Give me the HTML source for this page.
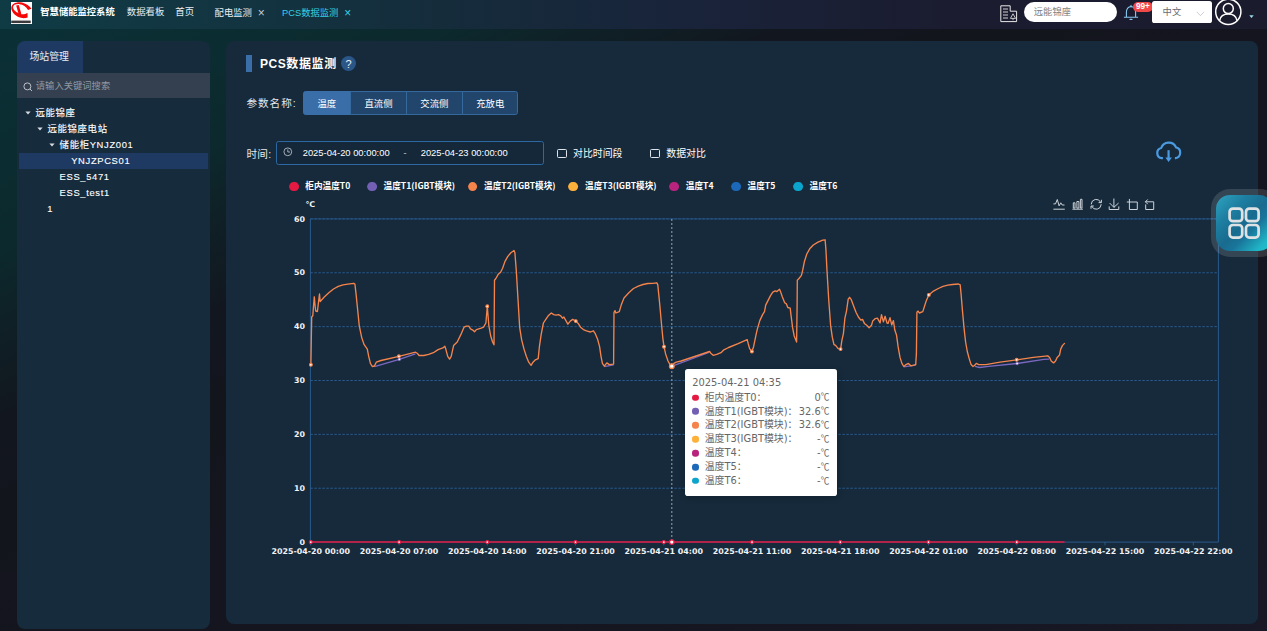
<!DOCTYPE html>
<html lang="zh-CN">
<head>
<meta charset="utf-8">
<title>PCS数据监测</title>
<style>
*{box-sizing:border-box;margin:0;padding:0}
html,body{width:1267px;height:631px;overflow:hidden}
body{position:relative;font-family:"Liberation Sans","Noto Sans CJK SC",sans-serif;color:#fff;
 background:linear-gradient(to bottom right,#0a3138 0%,#0b2d31 12%,#0c292d 20%,#0f2026 26%,#12171f 33%,#13151d 40%,#15151f 65%,#181826 100%);}
.abs{position:absolute;white-space:nowrap}
/* header */
.hdr{position:absolute;left:0;top:0;width:1267px;height:28.9px;
 background:linear-gradient(90deg,#0f3b45 0%,#123642 15%,#152c3b 35%,#19233a 55%,#1b1c30 75%,#1b1b2e 100%);}
.logo{position:absolute;left:10.8px;top:1.9px;width:21.4px;height:21.8px;background:#fff}
.t{position:absolute;white-space:nowrap;line-height:1;transform:translateY(-50%)}
/* panels */
.side{position:absolute;left:16.8px;top:41.2px;width:193.2px;height:588.3px;background:#162b3c;border-radius:8px;overflow:hidden}
.main{position:absolute;left:225.6px;top:41.2px;width:1032.2px;height:582.5px;background:#162a3b;border-radius:8px}
.tab{position:absolute;left:0;top:0;width:66.2px;height:32px;background:#1e3a62}
.search{position:absolute;left:0;top:32px;width:193.2px;height:24.8px;background:#34404f}
.sel{position:absolute;left:2.2px;top:111.9px;width:189px;height:15.6px;background:#1e3a62}
.tree{font-size:9.4px;letter-spacing:0.66px;color:#fff}
.tree .t{margin-top:-0.1px;-webkit-text-stroke:0.12px #fff}
.caret{position:absolute;width:0;height:0;border-left:2.8px solid transparent;border-right:2.8px solid transparent;border-top:3.3px solid #d5dbe3;transform:translateY(-35%);margin-left:0.7px}
/* buttons */
.btn{position:absolute;top:91.3px;height:23.5px;background:#22466b;border:0.9px solid #35689d;font-size:9.4px;color:#fff;text-align:center;line-height:23px}
.btn.on{background:#3a6ea8;border-color:#3a6ea8}
.range{position:absolute;left:276.4px;top:141.2px;width:267.2px;height:24.3px;border:0.9px solid #2c68a3;border-radius:2.6px;background:#14283a}
.cb{position:absolute;width:9.4px;height:9.4px;border:0.9px solid #dfe4ea;border-radius:1.4px;background:transparent}
.dot{position:absolute;width:9.8px;height:9.8px;border-radius:50%;transform:translate(-50%,-50%)}
.lg{position:absolute;white-space:nowrap;line-height:1;transform:translateY(-50%);font-family:"Noto Sans CJK SC","Liberation Sans",sans-serif;font-weight:bold;font-size:8.65px;color:#fff}
.chart{position:absolute;left:0;top:0;pointer-events:none}
.chart .ax{font-family:"DejaVu Sans","Noto Sans CJK SC",sans-serif;font-weight:bold;font-size:7.92px;fill:#f1f3f6}
/* tooltip */
.tip{position:absolute;left:685px;top:368.6px;width:151.8px;height:127.3px;background:#fff;border-radius:2.8px;box-shadow:0.6px 1.2px 6px rgba(0,0,0,.2);
 font-family:"DejaVu Sans","Noto Sans CJK SC",sans-serif;color:#666;font-size:9.9px}
.tip .r{position:absolute;left:6.8px;right:7.5px;height:13.87px;line-height:13.87px;white-space:nowrap}
.tip .r i{position:absolute;left:0.4px;top:50%;width:6.6px;height:6.6px;border-radius:50%;transform:translateY(-50%)}
.tip .r span{position:absolute;left:12.9px}
.tip .r b{position:absolute;right:0;font-weight:normal}
.tip .r b em{position:relative;top:-0.4px;font-style:normal;font-family:"Noto Sans CJK SC",sans-serif;font-size:8.6px}
/* float */
.fab{position:absolute;left:1210.6px;top:189.2px;width:68px;height:67.8px;border-radius:19px;background:rgba(255,255,255,.13)}
.fab .in{position:absolute;left:5.6px;top:5.5px;width:56.8px;height:56.7px;border-radius:14px;
 background:linear-gradient(135deg,#2fa3c0 0%,#1d7fa2 28%,#186b8e 50%,#19749a 62%,#1fb4c6 85%,#22c6d0 100%)}
</style>
</head>
<body>
<!-- header -->
<div class="hdr">
 <div class="logo">
  <svg width="21.4" height="21.8" viewBox="0 0 477 488">
   <path d="M457 152 C420 90 330 20 200 5 C100 0 10 50 5 130 C5 230 110 340 250 360 C300 365 340 355 372 345 L368 240 C320 275 260 285 215 270 C130 245 50 190 45 120 C45 70 100 42 190 48 C270 55 340 100 380 178 Z" fill="#f40808"/>
   <path d="M115 78 L172 66 L230 265 L172 278 Z" fill="#f40808"/>
   <rect x="4" y="416" width="436" height="56" fill="#3a3a3a"/>
  </svg>
 </div>
 <div class="t" style="left:40.3px;top:13.3px;font-size:9.3px;font-weight:bold">智慧储能监控系统</div>
 <div class="t" style="left:126.8px;top:11.6px;font-size:9.4px;color:#e9eef2">数据看板</div>
 <div class="t" style="left:175.3px;top:11.6px;font-size:9.4px;color:#e9eef2">首页</div>
 <div class="t" style="left:214.6px;top:13.8px;font-size:9.3px;color:#e9eef2">配电监测</div>
 <div class="t" style="left:257.8px;top:13.4px;font-size:12px;color:#c5ccd3">×</div>
 <div class="t" style="left:282.1px;top:13.8px;font-size:9.3px;color:#35d0e6">PCS数据监测</div>
 <div class="t" style="left:344.3px;top:13.4px;font-size:12px;color:#35d0e6">×</div>

 <!-- doc icon -->
 <svg class="abs" style="left:1000px;top:5px" width="18" height="18" viewBox="0 0 18 18" fill="none" stroke="#e8e8e8" stroke-width="1">
  <path d="M0.8 0.8 H10.2 V6.2 H16.6 V16.6 H0.8 Z"/>
  <path d="M3 4 H8 M3 7 H8 M3 10 H8 M3 13 H8" stroke-width="0.9"/>
  <path d="M13 8.8 L15.6 13.4 H10.4 Z M13 13.4 V15.2" stroke-width="0.8"/>
 </svg>
 <!-- pill -->
 <div class="abs" style="left:1023.8px;top:1.5px;width:92.9px;height:20px;border-radius:10px;background:#fff"></div>
 <div class="t" style="left:1033.8px;top:12.6px;font-size:9.3px;color:#7c7f86">远能锦座</div>
 <!-- bell -->
 <svg class="abs" style="left:1122.8px;top:3.9px" width="16" height="17" viewBox="0 0 16 17" fill="none" stroke="#86c9ee" stroke-width="1.1">
  <path d="M0.9 13.2 H15.1 M3.4 13 V8 C3.4 4.6 5.4 2.6 8 2.6 C10.6 2.6 12.6 4.6 12.6 8 V13"/>
  <path d="M8 1.2 V2.6 M7 15.4 H9" stroke-linecap="round"/>
 </svg>
 <div class="abs" style="left:1132.5px;top:1.7px;width:20.6px;height:10.4px;border-radius:5.2px;background:#f14848"></div>
 <div class="t" style="left:1135.9px;top:7.2px;font-size:8.2px;font-weight:bold;color:#fff">99+</div>
 <!-- select -->
 <div class="abs" style="left:1152.2px;top:1.4px;width:59.8px;height:21.4px;border-radius:2.6px;background:#fff"></div>
 <div class="t" style="left:1162.6px;top:12.5px;font-size:9.3px;color:#686b72">中文</div>
 <svg class="abs" style="left:1196px;top:11.2px" width="9" height="6" viewBox="0 0 9 6" fill="none" stroke="#c4c8cf" stroke-width="0.9"><path d="M0.8 0.9 L4.4 4.6 L8 0.9"/></svg>
 <!-- avatar -->
 <svg class="abs" style="left:1214px;top:-2px" width="29" height="29" viewBox="0 0 29 29" fill="none" stroke="#fff" stroke-width="1.5">
  <circle cx="14.3" cy="13.8" r="12.6"/>
  <circle cx="14.3" cy="10.6" r="5"/>
  <path d="M5.6 22.6 C6.4 18.2 9.8 16 14.3 16 C18.8 16 22.2 18.2 23 22.6"/>
 </svg>
 <svg class="abs" style="left:1248.6px;top:14.7px" width="5" height="3.4" viewBox="0 0 5 3.4"><path d="M0.3 0.3 H4.7 L2.5 3.1 Z" fill="#9bd6f2"/></svg>
</div>

<!-- sidebar -->
<div class="side">
 <div class="tab"></div>
 <div class="t" style="left:12.6px;top:16px;font-size:9.9px;color:#e8edf3">场站管理</div>
 <div class="search"></div>
 <svg class="abs" style="left:5.8px;top:40.6px" width="10" height="10" viewBox="0 0 10 10" fill="none" stroke="#c9ced6" stroke-width="0.9"><circle cx="4.4" cy="4.4" r="3.5"/><path d="M7 7 L9 9"/></svg>
 <div class="t" style="left:19px;top:45.9px;font-size:9.3px;color:#8f98a4">请输入关键词搜索</div>
 <div class="sel"></div>
 <div class="tree">
  <svg class="abs" style="left:7.9px;top:69.8px" width="6" height="4" viewBox="0 0 6 4"><path d="M0.4 0.4 H5.6 L3 3.6 Z" fill="#d8dde4"/></svg>
  <div class="t" style="left:18.7px;top:71.9px">远能锦座</div>
  <svg class="abs" style="left:20.0px;top:85.9px" width="6" height="4" viewBox="0 0 6 4"><path d="M0.4 0.4 H5.6 L3 3.6 Z" fill="#d8dde4"/></svg>
  <div class="t" style="left:30.7px;top:88px">远能锦座电站</div>
  <svg class="abs" style="left:32.3px;top:102.1px" width="6" height="4" viewBox="0 0 6 4"><path d="M0.4 0.4 H5.6 L3 3.6 Z" fill="#d8dde4"/></svg>
  <div class="t" style="left:42.8px;top:104px">储能柜YNJZ001</div>
  <div class="t" style="left:54.4px;top:119.8px">YNJZPCS01</div>
  <div class="t" style="left:42.8px;top:136px">ESS_5471</div>
  <div class="t" style="left:42.8px;top:152px">ESS_test1</div>
  <div class="t" style="left:30.5px;top:168px">1</div>
 </div>
</div>

<!-- main -->
<div class="main"></div>
<div class="abs" style="left:246px;top:54.8px;width:5.6px;height:16.8px;background:#3a6ea8"></div>
<div class="t" style="left:259.9px;top:63.6px;font-size:12px;font-weight:bold;letter-spacing:0.6px">PCS数据监测</div>
<div class="abs" style="left:340.9px;top:56.1px;width:15px;height:15px;border-radius:50%;background:#2a5688"></div>
<div class="t" style="left:345.5px;top:63.9px;font-size:11px;color:#e6edf5">?</div>

<div class="t" style="left:246.5px;top:102.6px;font-size:10.6px;color:#e3e8ee;letter-spacing:0.95px">参数名称:</div>
<div class="btn on" style="left:303px;width:47.6px;border-radius:2.6px 0 0 2.6px">温度</div>
<div class="btn" style="left:350.3px;width:56.4px">直流侧</div>
<div class="btn" style="left:406.2px;width:56.4px">交流侧</div>
<div class="btn" style="left:462.1px;width:56.4px;border-radius:0 2.6px 2.6px 0">充放电</div>

<div class="t" style="left:246.4px;top:154px;font-size:10.6px;color:#e3e8ee;letter-spacing:0.3px">时间:</div>
<div class="range"></div>
<svg class="abs" style="left:283.3px;top:147.2px" width="10" height="10" viewBox="0 0 10 10" fill="none" stroke="#c6ccd4" stroke-width="0.8"><circle cx="4.8" cy="4.8" r="3.9"/><path d="M4.8 2.4 V5 H7"/></svg>
<div class="t" style="left:302.7px;top:154.1px;font-size:9.37px;color:#fff">2025-04-20 00:00:00</div>
<div class="t" style="left:403.4px;top:153.8px;font-size:9.3px;color:#c6ccd4">-</div>
<div class="t" style="left:420.7px;top:154.1px;font-size:9.37px;color:#fff">2025-04-23 00:00:00</div>

<div class="cb" style="left:557.2px;top:148.6px"></div>
<div class="t" style="left:573.1px;top:153.6px;font-size:9.9px;color:#fff">对比时间段</div>
<div class="cb" style="left:650.2px;top:148.6px"></div>
<div class="t" style="left:666.3px;top:153.6px;font-size:9.9px;color:#fff">数据对比</div>

<!-- cloud download -->
<svg class="abs" style="left:1154px;top:140px" width="30" height="24" viewBox="0 0 30 24" fill="none" stroke="#4a9ae2" stroke-width="2.2" stroke-linecap="butt" stroke-linejoin="round">
 <path d="M8.9 18.2 H7.8 A5.2 5.2 0 0 1 7.2 8 A7.95 7.95 0 0 1 22 7.4 A5.5 5.5 0 0 1 21.4 18.2 H20.9"/>
 <path d="M14.57 10.2 V18.4"/>
 <path d="M11.4 17.5 H17.9 L14.57 22 Z" fill="#4a9ae2" stroke="none"/>
</svg>

<!-- legend -->
<div class="dot" style="left:293.8px;top:186.5px;background:#e51a42"></div><div class="lg" style="left:305.3px;top:185.4px">柜内温度T0</div>
<div class="dot" style="left:372px;top:186.5px;background:#7360b4"></div><div class="lg" style="left:383.6px;top:185.4px">温度T1(IGBT模块)</div>
<div class="dot" style="left:472.5px;top:186.5px;background:#f5844c"></div><div class="lg" style="left:484.1px;top:185.4px">温度T2(IGBT模块)</div>
<div class="dot" style="left:573.3px;top:186.5px;background:#fdb03a"></div><div class="lg" style="left:585px;top:185.4px">温度T3(IGBT模块)</div>
<div class="dot" style="left:674.2px;top:186.5px;background:#b7237d"></div><div class="lg" style="left:685.8px;top:185.4px">温度T4</div>
<div class="dot" style="left:735.9px;top:186.5px;background:#1b69b8"></div><div class="lg" style="left:747.5px;top:185.4px">温度T5</div>
<div class="dot" style="left:797.9px;top:186.5px;background:#0aa4cc"></div><div class="lg" style="left:809.5px;top:185.4px">温度T6</div>

<!-- toolbox -->
<svg class="abs" style="left:1052px;top:197px" width="106" height="15" viewBox="0 0 106 15" fill="none" stroke="#cdd2d8" stroke-width="1" stroke-linejoin="round" stroke-linecap="round">
 <path d="M1.8 6.9 H3.5 L5.3 2.5 L7.1 8.9 L8.8 5.8 L10.2 8 H12.1 M1.8 12.2 H12.4"/>
 <path d="M20.8 12.2 H30.5 M21.3 10.7 V5.8 H23 V10.7 Z M24.9 10.7 V4.5 H26.9 V10.7 Z M28.4 10.7 V2.3 H30 V10.7 Z"/>
 <path d="M39.2 7 A5 5 0 0 1 48.7 5.2 M49.2 7.6 A5 5 0 0 1 39.7 9.4"/>
 <path d="M49.4 3.2 V5.6 H47 M39 11.4 V9 H41.4"/>
 <path d="M61.9 1.9 V10.1 M57.9 6.3 L61.9 10.3 L66.3 6.3 M57.2 9.8 V12.5 H66.8 V9.8"/>
 <path d="M75.2 5 H85.3 V12.5 H77.4 V2.3"/>
 <path d="M95.5 2.7 L93.4 4.8 L95.5 6.9 M93.6 4.8 H101.7 V12.5 H93.7 V7.8"/>
</svg>

<svg class="chart" width="1267" height="631" viewBox="0 0 1267 631">
<line x1="310.4" y1="218.90" x2="1218.4" y2="218.90" stroke="#2b5f96" stroke-width="0.9" stroke-dasharray="2.4 1.6"/>
<line x1="310.4" y1="272.77" x2="1218.4" y2="272.77" stroke="#2b5f96" stroke-width="0.9" stroke-dasharray="2.4 1.6"/>
<line x1="310.4" y1="326.63" x2="1218.4" y2="326.63" stroke="#2b5f96" stroke-width="0.9" stroke-dasharray="2.4 1.6"/>
<line x1="310.4" y1="380.50" x2="1218.4" y2="380.50" stroke="#2b5f96" stroke-width="0.9" stroke-dasharray="2.4 1.6"/>
<line x1="310.4" y1="434.37" x2="1218.4" y2="434.37" stroke="#2b5f96" stroke-width="0.9" stroke-dasharray="2.4 1.6"/>
<line x1="310.4" y1="488.23" x2="1218.4" y2="488.23" stroke="#2b5f96" stroke-width="0.9" stroke-dasharray="2.4 1.6"/>
<line x1="310.4" y1="218.9" x2="310.4" y2="545.1" stroke="#2b5f96" stroke-width="0.9"/>
<line x1="1218.4" y1="218.9" x2="1218.4" y2="542.1" stroke="#2b5f96" stroke-width="0.9"/>
<line x1="310.4" y1="542.1" x2="1218.4" y2="542.1" stroke="#2b5f96" stroke-width="0.9"/>
<line x1="310.4" y1="218.9" x2="1218.4" y2="218.9" stroke="#2b5f96" stroke-width="0.9" stroke-opacity="0.7"/>
<line x1="310.8" y1="542.1" x2="310.8" y2="545.4" stroke="#2b5f96" stroke-width="0.9"/>
<line x1="399.1" y1="542.1" x2="399.1" y2="545.4" stroke="#2b5f96" stroke-width="0.9"/>
<line x1="487.3" y1="542.1" x2="487.3" y2="545.4" stroke="#2b5f96" stroke-width="0.9"/>
<line x1="575.5" y1="542.1" x2="575.5" y2="545.4" stroke="#2b5f96" stroke-width="0.9"/>
<line x1="663.8" y1="542.1" x2="663.8" y2="545.4" stroke="#2b5f96" stroke-width="0.9"/>
<line x1="752.0" y1="542.1" x2="752.0" y2="545.4" stroke="#2b5f96" stroke-width="0.9"/>
<line x1="840.3" y1="542.1" x2="840.3" y2="545.4" stroke="#2b5f96" stroke-width="0.9"/>
<line x1="928.5" y1="542.1" x2="928.5" y2="545.4" stroke="#2b5f96" stroke-width="0.9"/>
<line x1="1016.8" y1="542.1" x2="1016.8" y2="545.4" stroke="#2b5f96" stroke-width="0.9"/>
<line x1="1105.0" y1="542.1" x2="1105.0" y2="545.4" stroke="#2b5f96" stroke-width="0.9"/>
<line x1="1193.3" y1="542.1" x2="1193.3" y2="545.4" stroke="#2b5f96" stroke-width="0.9"/>
<text x="305" y="221.5" text-anchor="end" class="ax">60</text>
<text x="305" y="275.4" text-anchor="end" class="ax">50</text>
<text x="305" y="329.2" text-anchor="end" class="ax">40</text>
<text x="305" y="383.1" text-anchor="end" class="ax">30</text>
<text x="305" y="437.0" text-anchor="end" class="ax">20</text>
<text x="305" y="490.8" text-anchor="end" class="ax">10</text>
<text x="305" y="544.7" text-anchor="end" class="ax">0</text>
<text x="310.4" y="206.6" text-anchor="middle" class="ax">℃</text>
<text x="310.8" y="554.2" text-anchor="middle" class="ax">2025-04-20 00:00</text>
<text x="399.1" y="554.2" text-anchor="middle" class="ax">2025-04-20 07:00</text>
<text x="487.3" y="554.2" text-anchor="middle" class="ax">2025-04-20 14:00</text>
<text x="575.5" y="554.2" text-anchor="middle" class="ax">2025-04-20 21:00</text>
<text x="663.8" y="554.2" text-anchor="middle" class="ax">2025-04-21 04:00</text>
<text x="752.0" y="554.2" text-anchor="middle" class="ax">2025-04-21 11:00</text>
<text x="840.3" y="554.2" text-anchor="middle" class="ax">2025-04-21 18:00</text>
<text x="928.5" y="554.2" text-anchor="middle" class="ax">2025-04-22 01:00</text>
<text x="1016.8" y="554.2" text-anchor="middle" class="ax">2025-04-22 08:00</text>
<text x="1105.0" y="554.2" text-anchor="middle" class="ax">2025-04-22 15:00</text>
<text x="1193.3" y="554.2" text-anchor="middle" class="ax">2025-04-22 22:00</text>
<line x1="671.8" y1="218.9" x2="671.8" y2="542.1" stroke="#8e98a4" stroke-width="1.1" stroke-dasharray="2 2"/>
<polyline points="374.5,366.7 399.3,359.3 415.5,353.8" fill="none" stroke="#7b68c0" stroke-width="1.3" stroke-linejoin="round"/>
<polyline points="674.2,365.4 708.9,352.5" fill="none" stroke="#7b68c0" stroke-width="1.3" stroke-linejoin="round"/>
<polyline points="974.9,366.3 979.6,367.5 988.7,366.3 1017.1,363.5 1043.9,359.4 1049.1,359.2" fill="none" stroke="#7b68c0" stroke-width="1.3" stroke-linejoin="round"/>
<polyline points="604.3,366.6 613.6,364.8" fill="none" stroke="#7b68c0" stroke-width="1.3" stroke-linejoin="round"/>
<polyline points="903.8,366.9 915.7,365.2" fill="none" stroke="#7b68c0" stroke-width="1.3" stroke-linejoin="round"/>
<circle cx="399.3" cy="359.3" r="1.3" fill="#fff" stroke="#7b68c0" stroke-width="0.9"/>
<circle cx="1017.1" cy="363.5" r="1.3" fill="#fff" stroke="#7b68c0" stroke-width="0.9"/>
<polyline points="310.9,364.8 311.3,340.0 311.7,317.0 312.8,315.8 313.6,305.0 314.3,296.8 315.0,305.0 315.7,311.0 317.4,311.6 318.5,302.0 319.5,294.0 320.2,301.6 324.0,297.3 328.8,292.8 333.5,289.0 338.3,286.4 343.0,284.9 347.8,284.2 353.7,283.3 354.9,284.0 356.1,294.4 357.3,306.3 359.2,325.3 361.6,337.2 364.0,344.4 367.3,349.1 368.7,356.3 370.4,363.4 372.3,366.5 374.4,366.0 376.3,362.2 381.0,360.5 398.9,356.3 415.6,352.2 417.2,353.2 419.1,355.5 423.9,355.5 428.6,354.4 433.4,352.7 438.1,349.6 442.9,347.9 444.8,346.3 445.8,349.1 447.7,356.3 449.6,359.1 451.2,356.3 453.6,345.6 457.2,342.0 460.7,334.9 464.0,327.2 466.4,326.1 468.8,326.1 470.5,328.9 472.8,330.1 474.5,331.8 476.4,329.6 478.8,328.9 481.2,328.2 483.5,327.2 485.9,323.0 487.3,306.3 488.8,325.3 490.7,336.0 492.6,342.0 494.0,344.8 494.5,280.2 495.9,278.5 498.3,274.2 500.6,272.3 502.6,268.3 504.9,261.6 507.8,256.4 510.9,252.8 514.0,250.5 514.9,252.8 516.3,270.7 518.0,299.2 519.7,327.7 521.6,339.6 524.0,349.1 526.3,356.3 528.7,362.2 531.1,365.3 533.0,362.2 535.4,359.8 538.2,358.6 539.4,346.7 541.1,334.9 543.4,323.0 545.8,319.4 548.2,315.8 551.3,313.0 553.7,314.6 556.0,315.1 558.4,314.6 560.8,315.8 562.5,318.2 563.9,317.0 565.6,320.1 567.9,324.2 570.3,321.1 572.7,319.4 575.8,321.1 578.2,323.4 580.5,327.2 583.4,329.6 585.8,330.6 588.1,331.3 590.5,332.0 593.4,330.8 595.3,333.7 597.7,339.6 599.6,346.7 601.0,356.3 602.4,363.4 604.3,366.2 606.9,362.9 609.3,364.6 613.6,364.1 614.0,312.3 615.0,310.6 615.9,313.0 619.3,311.6 621.2,305.1 624.0,298.0 628.8,292.8 633.5,288.5 638.3,286.1 643.0,284.5 647.8,283.5 652.6,283.3 656.8,282.8 657.8,284.9 659.7,304.0 661.6,325.3 663.0,339.6 664.0,346.7 665.6,353.9 668.0,361.0 670.4,365.3 671.8,366.2 673.9,363.4 676.3,362.2 681.1,361.0 709.6,351.5 710.8,353.2 713.2,355.3 716.7,354.4 721.0,352.7 723.9,349.8 728.6,347.5 738.1,343.7 747.2,339.6 748.1,343.2 749.6,348.6 751.9,351.5 753.6,346.7 756.0,334.9 757.4,328.9 759.8,320.6 762.6,314.6 764.5,311.6 765.7,305.1 768.1,300.4 770.5,295.6 772.8,292.1 775.2,290.9 776.9,291.6 779.5,289.2 780.7,292.1 782.3,296.8 784.7,302.8 786.4,303.9 787.8,307.5 790.2,308.2 791.1,315.8 792.6,327.7 794.2,336.0 796.6,342.0 797.1,306.3 797.3,280.2 799.0,278.5 801.4,275.4 802.6,270.7 804.5,261.2 806.8,254.0 809.7,248.8 813.3,245.0 818.0,242.1 822.8,240.2 825.1,239.8 825.9,249.3 827.0,270.7 828.7,299.2 830.6,325.3 832.3,337.2 833.9,344.4 835.8,345.6 838.2,348.6 840.6,349.1 841.8,340.8 843.4,333.7 844.9,318.2 846.5,311.1 848.2,299.2 849.6,297.3 851.3,299.7 853.7,306.3 856.0,312.3 858.4,317.0 860.8,320.1 862.5,319.4 864.4,323.4 866.7,325.3 869.1,327.7 871.5,325.3 872.7,321.1 875.1,318.7 877.4,318.2 879.1,321.1 880.1,323.0 881.5,314.6 883.4,321.8 885.1,316.3 887.0,323.0 888.1,323.4 890.0,317.7 891.7,324.9 893.4,320.6 894.8,330.1 896.5,334.9 898.1,346.7 900.0,357.4 901.9,363.4 903.8,366.5 906.0,364.6 908.4,363.4 910.9,365.8 915.7,364.6 916.4,353.9 916.9,312.3 918.1,311.1 919.3,313.0 922.8,311.6 924.5,306.3 926.4,300.4 928.8,294.9 933.5,291.1 938.3,288.5 943.0,286.4 947.8,285.2 952.6,284.5 958.5,284.0 960.2,284.9 961.1,294.4 962.5,311.1 964.0,327.7 965.6,342.0 967.3,351.5 969.2,358.6 971.1,364.6 973.0,366.5 974.7,365.3 976.3,363.4 978.7,364.6 985.8,364.6 1000.1,362.2 1016.7,359.8 1033.4,357.4 1047.7,355.8 1049.6,357.4 1051.2,361.0 1053.6,362.9 1055.5,361.0 1057.2,357.4 1059.5,355.1 1060.7,349.1 1062.4,345.6 1064.5,343.4" fill="none" stroke="#f5844c" stroke-width="1.35" stroke-linejoin="round" stroke-linecap="round"/>
<circle cx="310.9" cy="364.8" r="1.4" fill="#fff" stroke="#f5844c" stroke-width="1.1"/>
<circle cx="398.9" cy="356.3" r="1.4" fill="#fff" stroke="#f5844c" stroke-width="1.1"/>
<circle cx="487.3" cy="306.3" r="1.4" fill="#fff" stroke="#f5844c" stroke-width="1.1"/>
<circle cx="575.8" cy="321.1" r="1.4" fill="#fff" stroke="#f5844c" stroke-width="1.1"/>
<circle cx="664" cy="346.7" r="1.4" fill="#fff" stroke="#f5844c" stroke-width="1.1"/>
<circle cx="751.9" cy="351.5" r="1.4" fill="#fff" stroke="#f5844c" stroke-width="1.1"/>
<circle cx="840.6" cy="349.1" r="1.4" fill="#fff" stroke="#f5844c" stroke-width="1.1"/>
<circle cx="928.8" cy="294.9" r="1.4" fill="#fff" stroke="#f5844c" stroke-width="1.1"/>
<circle cx="1016.7" cy="359.8" r="1.4" fill="#fff" stroke="#f5844c" stroke-width="1.1"/>
<circle cx="671.8" cy="366.2" r="2.3" fill="#fff" stroke="#f5844c" stroke-width="1.3"/>
<line x1="310.4" y1="542.1" x2="1064.5" y2="542.1" stroke="#e51a42" stroke-width="1.5"/>
<circle cx="310.8" cy="542.1" r="1.5" fill="#fff" stroke="#e51a42" stroke-width="1.2"/>
<circle cx="399.1" cy="542.1" r="1.5" fill="#fff" stroke="#e51a42" stroke-width="1.2"/>
<circle cx="487.3" cy="542.1" r="1.5" fill="#fff" stroke="#e51a42" stroke-width="1.2"/>
<circle cx="575.5" cy="542.1" r="1.5" fill="#fff" stroke="#e51a42" stroke-width="1.2"/>
<circle cx="663.8" cy="542.1" r="1.5" fill="#fff" stroke="#e51a42" stroke-width="1.2"/>
<circle cx="752.0" cy="542.1" r="1.5" fill="#fff" stroke="#e51a42" stroke-width="1.2"/>
<circle cx="840.3" cy="542.1" r="1.5" fill="#fff" stroke="#e51a42" stroke-width="1.2"/>
<circle cx="928.5" cy="542.1" r="1.5" fill="#fff" stroke="#e51a42" stroke-width="1.2"/>
<circle cx="1016.8" cy="542.1" r="1.5" fill="#fff" stroke="#e51a42" stroke-width="1.2"/>
<circle cx="671.8" cy="542.1" r="2.3" fill="#fff" stroke="#e51a42" stroke-width="1.3"/>
</svg>

<!-- tooltip -->
<div class="tip">
 <div class="r" style="top:7.9px;left:7.2px">2025-04-21 04:35</div>
 <div class="r" style="top:22.10px"><i style="background:#e51a42"></i><span>柜内温度T0：</span><b>0<em>℃</em></b></div>
 <div class="r" style="top:35.97px"><i style="background:#7360b4"></i><span>温度T1(IGBT模块)：</span><b>32.6<em>℃</em></b></div>
 <div class="r" style="top:49.84px"><i style="background:#f5844c"></i><span>温度T2(IGBT模块)：</span><b>32.6<em>℃</em></b></div>
 <div class="r" style="top:63.71px"><i style="background:#fdb03a"></i><span>温度T3(IGBT模块)：</span><b>-<em>℃</em></b></div>
 <div class="r" style="top:77.58px"><i style="background:#b7237d"></i><span>温度T4：</span><b>-<em>℃</em></b></div>
 <div class="r" style="top:91.45px"><i style="background:#1b69b8"></i><span>温度T5：</span><b>-<em>℃</em></b></div>
 <div class="r" style="top:105.32px"><i style="background:#0aa4cc"></i><span>温度T6：</span><b>-<em>℃</em></b></div>
</div>

<!-- floating button -->
<div class="fab"><div class="in"></div>
 <svg class="abs" style="left:17.4px;top:18.2px" width="33" height="33" viewBox="0 0 33 33" fill="none" stroke="#dfe2e4" stroke-width="2.7">
  <rect x="1.6" y="1.6" width="12.6" height="12.6" rx="3.3"/>
  <rect x="18" y="1.6" width="12.6" height="12.6" rx="3.3"/>
  <rect x="1.6" y="18" width="12.6" height="12.6" rx="3.3"/>
  <rect x="18" y="18" width="12.6" height="12.6" rx="3.3"/>
 </svg>
</div>
</body>
</html>
